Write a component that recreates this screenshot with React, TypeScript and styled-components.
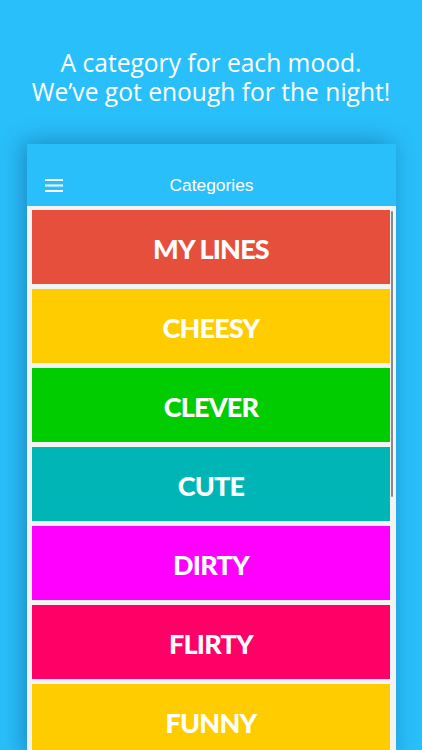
import React from "react";
import styled, { createGlobalStyle } from "styled-components";

const Global = createGlobalStyle`
  html, body { margin: 0; padding: 0; }
  body {
    background: #29bffb;
    width: 422px;
    height: 750px;
    overflow: hidden;
  }
`;

const Page = styled.div`
  width: 422px;
  height: 750px;
  display: flex;
  flex-direction: column;
  align-items: flex-start;
  overflow: hidden;
`;

const Headline = styled.h1`
  margin: 0;
  padding-top: 48px;
  width: 100%;
  display: flex;
  flex-direction: column;
  align-items: center;
  font-family: "Open Sans", sans-serif;
  font-weight: 400;
  font-size: 24.6px;
  color: #ffffff;
`;

const Line = styled.span`
  display: block;
  height: 29px;
  line-height: 29px;
  white-space: nowrap;
`;

const Phone = styled.div`
  margin-top: 38px;
  margin-left: 27px;
  width: 369px;
  flex: 1;
  display: flex;
  flex-direction: column;
  background: #f3f3f3;
  box-shadow: -4px -2px 22px rgba(0, 40, 90, 0.35);
`;

const Header = styled.header`
  height: 62px;
  box-sizing: border-box;
  padding: 20px 18px 0 18px;
  display: grid;
  grid-template-columns: 18px 1fr 18px;
  align-items: center;
  background: #29bffb;
`;

const Title = styled.div`
  text-align: center;
  font-family: "Liberation Sans", Arial, sans-serif;
  font-size: 17.4px;
  color: #ffffff;
`;

const Body = styled.div`
  flex: 1;
  display: flex;
  padding: 4px 0 0 5px;
  gap: 1px;
  overflow: hidden;
`;

const List = styled.div`
  width: 358px;
  display: flex;
  flex-direction: column;
  gap: 5px;
`;

const Row = styled.div<{ $bg: string }>`
  flex: 0 0 74px;
  background: ${(p) => p.$bg};
  display: flex;
  align-items: center;
  justify-content: center;
  font-family: Lato, "Open Sans", sans-serif;
  font-weight: 900;
  font-size: 27px;
  letter-spacing: -0.8px;
  color: #ffffff;
  padding-top: 2px;
  box-sizing: border-box;
`;

const Scrollbar = styled.div`
  width: 2px;
  height: 286px;
  margin-top: 1px;
  background: #8a8a8a;
  border-radius: 1px;
`;

const Menu = () => (
  <svg width="18" height="13" viewBox="0 0 18 13" style={{ display: "block" }}>
    <rect x="0" y="0" width="18" height="2" fill="#fff" />
    <rect x="0" y="5.5" width="18" height="2" fill="#fff" />
    <rect x="0" y="11" width="18" height="2" fill="#fff" />
  </svg>
);

const rows: [string, string][] = [
  ["MY LINES", "#e74f3d"],
  ["CHEESY", "#ffcc00"],
  ["CLEVER", "#00cc00"],
  ["CUTE", "#00b5b6"],
  ["DIRTY", "#ff00ff"],
  ["FLIRTY", "#ff0066"],
  ["FUNNY", "#ffcc00"],
];

export default function App() {
  return (
    <>
      <Global />
      <Page>
        <Headline>
          <Line>A category for each mood.</Line>
          <Line>We’ve got enough for the night!</Line>
        </Headline>
        <Phone>
          <Header>
            <Menu />
            <Title>Categories</Title>
            <span />
          </Header>
          <Body>
            <List>
              {rows.map(([label, bg]) => (
                <Row key={label} $bg={bg}>
                  {label}
                </Row>
              ))}
            </List>
            <Scrollbar />
          </Body>
        </Phone>
      </Page>
    </>
  );
}
